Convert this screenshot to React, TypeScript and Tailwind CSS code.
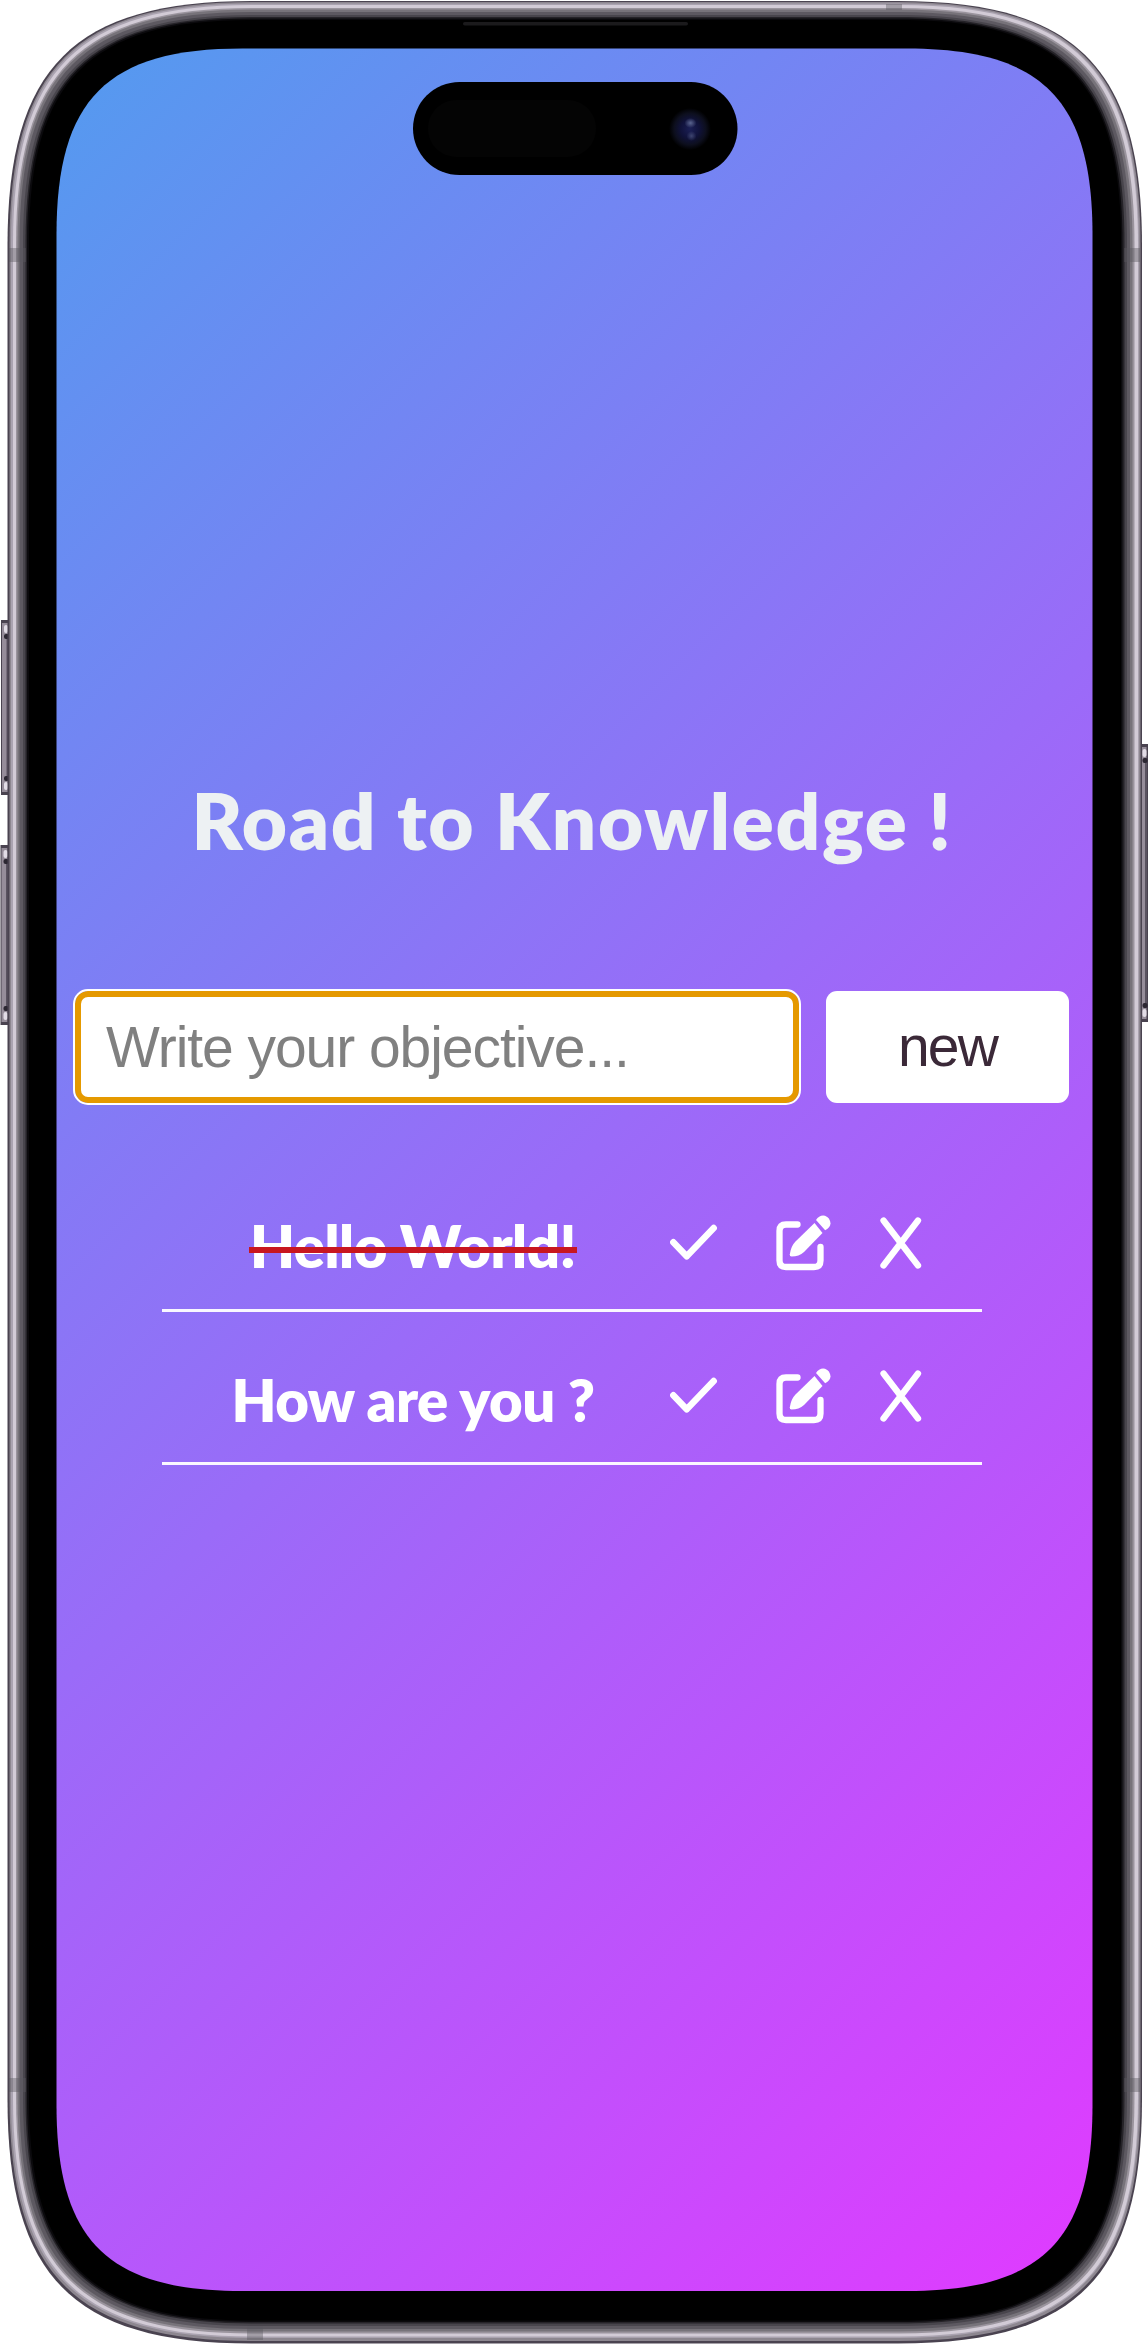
type Box = [number, number, number, number, number];

// Rounded rectangle with continuous-curvature corners: left, top, right, bottom, radius.
function squircle([l, t, r, b, c]: Box): string {
  const k = c * 0.272;
  return `M${l + c} ${t}H${r - c}C${r - k} ${t} ${r} ${t + k} ${r} ${t + c}V${b - c}C${r} ${b - k} ${r - k} ${b} ${r - c} ${b}H${l + c}C${l + k} ${b} ${l} ${b - k} ${l} ${b - c}V${t + c}C${l} ${t + k} ${l + k} ${t} ${l + c} ${t}Z`;
}

const screenBox: Box = [56.5, 48.5, 1092.5, 2291, 186];

const metal: [Box, string][] = [
  [[7.5, 1, 1142, 2343.5, 244], "#4a4350"],
  [[9.5, 2, 1140.5, 2341, 243], "#8d8790"],
  [[11, 3.5, 1139, 2338, 241], "#aaa3b0"],
  [[13, 5, 1138, 2336.5, 239], "#d2cbd6"],
  [[16, 8, 1134.5, 2333.5, 236], "#9a949d"],
  [[17.5, 9.5, 1132.5, 2331.5, 234], "#77737a"],
  [[19.5, 12, 1130, 2329, 232], "#5d5961"],
  [[23, 15, 1127, 2326, 229], "#48454c"],
  [[25.5, 17, 1124.5, 2323.5, 226], "#252328"],
  [[27, 18.5, 1122.5, 2322, 224], "#0b0a0d"],
  [[29, 20, 1121, 2320.5, 222], "#000000"],
];

function SideButton({ x, y, h }: { x: number; y: number; h: number }) {
  return (
    <g>
      <rect x={x} y={y} width="9" height={h} fill="#4a4350" />
      <rect x={x + 1} y={y + 3} width="6" height={h - 6} fill="#968d9a" />
      <rect x={x + 5.5} y={y + 14} width="2" height={h - 28} fill="#5a5360" />
      <rect x={x + 3} y={y + 5} width="4" height="8" rx="2" fill="#e2dce6" />
      <rect x={x + 3} y={y + 14} width="5" height="5" rx="2" fill="#2c2732" />
      <rect x={x + 3} y={y + h - 13} width="4" height="8" rx="2" fill="#e2dce6" />
      <rect x={x + 3} y={y + h - 19} width="5" height="5" rx="2" fill="#2c2732" />
    </g>
  );
}

function PhoneFrame() {
  return (
    <svg className="pointer-events-none absolute inset-0" width="1148" height="2344" viewBox="0 0 1148 2344" aria-hidden="true">
      <defs>
        <mask id="bezel">
          <rect width="1148" height="2344" fill="white" />
          <path d={squircle(screenBox)} fill="black" />
        </mask>
        <radialGradient id="lens">
          <stop offset="0" stopColor="#1b1f55" />
          <stop offset="0.45" stopColor="#10123a" />
          <stop offset="0.75" stopColor="#0d0f1e" />
          <stop offset="1" stopColor="#000000" />
        </radialGradient>
        <radialGradient id="glint">
          <stop offset="0" stopColor="#5a648f" />
          <stop offset="1" stopColor="#5a648f" stopOpacity="0" />
        </radialGradient>
      </defs>
      <SideButton x={1} y={620} h={175} />
      <SideButton x={0.5} y={845} h={180} />
      <SideButton x={1139.5} y={744} h={278} />
      <g mask="url(#bezel)">
        {metal.map(([box, fill]) => (
          <path key={fill} d={squircle(box)} fill={fill} />
        ))}
        <g fill="#5b5760" opacity="0.4">
          <rect x="9" y="248" width="17" height="14" />
          <rect x="1124" y="248" width="16" height="14" />
          <rect x="9" y="2078" width="17" height="14" />
          <rect x="1124" y="2078" width="16" height="14" />
          <rect x="886" y="4" width="16" height="6" />
          <rect x="247" y="2326" width="16" height="14" />
        </g>
        <rect x="463" y="22" width="225" height="3.5" rx="1.75" fill="#1b1a1c" />
      </g>
      <rect x="413" y="82" width="324.5" height="93" rx="46.5" fill="#000000" />
      <rect x="428" y="100" width="168" height="57" rx="28" fill="#040404" />
      <circle cx="690" cy="129" r="21" fill="url(#lens)" />
      <ellipse cx="690.5" cy="123" rx="6" ry="5" fill="url(#glint)" />
      <ellipse cx="691.5" cy="136" rx="5" ry="5" fill="url(#glint)" opacity="0.6" />
    </svg>
  );
}

function CheckIcon() {
  return (
    <svg width="48" height="54" viewBox="0 0 48 54" fill="none" stroke="white" strokeWidth="6.5" strokeLinecap="round" strokeLinejoin="round">
      <path d="M3.3 25.3 16.7 39.3 43.7 11" />
    </svg>
  );
}

function EditIcon() {
  return (
    <svg width="56" height="58" viewBox="0 0 56 58" fill="none">
      <path d="M22.5 9.5H11Q4.5 9.5 4.5 16V45.500Q4.5 52 11 52H39Q45.5 52 45.5 45.5V32" stroke="white" strokeWidth="6.3" strokeLinecap="round" />
      <path d="M39.5 8 47.5 18 29 37Q24 41.5 16.5 41.5Q14.5 41.5 14.8 39.3Q16 31 20.5 26.5Z" fill="white" />
      <path d="M41 5Q44.5 -0.500 50 0.700Q55 2.500 55.5 8.500Q55.5 12 50.2 15.3Z" fill="white" />
    </svg>
  );
}

function CloseIcon() {
  return (
    <svg width="44" height="54" viewBox="0 0 44 54" fill="none" stroke="white" strokeWidth="6.3" strokeLinecap="round">
      <path d="M3.5 3.5 38 48.5M38 3.5 3.5 48.5" />
    </svg>
  );
}

const items = [
  { text: "Hello World!", done: true },
  { text: "How are you ?", done: false },
];

export default function App() {
  return (
    <div className="relative h-[2344px] w-[1148px] overflow-hidden bg-white">
      <main className="ml-[53px] h-[2344px] w-[1042px] py-[45px]">
        <div className="flex h-[2249px] flex-col items-center rounded-[150px] bg-linear-[135deg] from-[#539bef] via-[#9a6bf8] to-[#e13aff] pt-[730px] pr-[4px]">
          <h1 className="flex h-[90px] items-center justify-center font-[Lato,sans-serif] text-[78px] leading-[90px] font-extrabold tracking-[1.7px] whitespace-nowrap text-[#edf1f3]">
            Road to Knowledge !
          </h1>
          <form className="mt-[126px] flex w-[994px] justify-between" onSubmit={(e) => e.preventDefault()}>
            <input
              type="text"
              placeholder="Write your objective..."
              className="h-[112px] w-[724px] rounded-[13px] border-[6px] border-[#e59900] bg-white pb-[1px] pl-[25px] font-['Liberation_Sans',sans-serif] text-[57px] tracking-[-1.05px] outline-[2.5px] outline-white placeholder:text-[#808080]"
            />
            <button className="h-[112px] w-[243px] rounded-[11px] bg-white font-['Liberation_Sans',sans-serif] text-[57px] tracking-[-1.8px] text-[#3b2938]">new</button>
          </form>
          <ul className="mt-[55px] w-[820px]">
            {items.map((item) => (
              <li key={item.text} className="flex h-[153.5px] items-end border-b-[3px] border-white/95 pb-[36px]">
                <div className="flex h-[58px] w-[508px] items-center justify-center pt-[5px] pr-[6px]">
                  <span className="relative font-[Lato,sans-serif] text-[58px] leading-[58px] font-extrabold tracking-[-0.5px] whitespace-nowrap text-white">
                    {item.text}
                    {item.done && <span className="absolute top-[30px] -right-px -left-px h-[5.5px] bg-[#c8171f]" />}
                  </span>
                </div>
                <div className="flex h-[58px] flex-1 items-center">
                  <CheckIcon />
                  <span className="ml-[57px]"><EditIcon /></span>
                  <span className="ml-[49px]"><CloseIcon /></span>
                </div>
              </li>
            ))}
          </ul>
        </div>
      </main>
      <PhoneFrame />
    </div>
  );
}
